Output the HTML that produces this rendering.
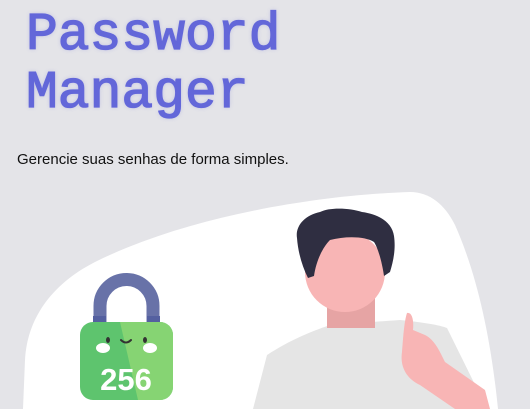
<!DOCTYPE html>
<html><head><style>
html,body{margin:0;padding:0;}
body{width:530px;height:409px;overflow:hidden;background:#e4e4e8;position:relative;font-family:"Liberation Sans",sans-serif;}
h1{position:absolute;left:26px;top:6px;margin:0;font-family:"Liberation Mono",monospace;font-weight:normal;-webkit-text-stroke:1.3px #6367d9;font-size:53px;line-height:58px;color:#6367d9;text-shadow:0 0 4px rgba(99,103,217,0.35);}
p{position:absolute;left:17px;top:151px;margin:0;font-size:15px;color:#111;}
svg{position:absolute;left:0;top:0;}
</style></head><body>
<h1>Password<br>Manager</h1>
<p>Gerencie suas senhas de forma simples.</p>
<svg width="530" height="409" viewBox="0 0 530 409">
<path d="M23 409 L25 360 C27 320 50 285 95 262 C190 215 320 195 410 192 C430 192 445 205 455 225 C475 270 490 330 498 409 Z" fill="#fff"/>
<path d="M100 323 L100 306 A26.5 26.5 0 0 1 153 306 L153 323" fill="none" stroke="#6872a8" stroke-width="13"/>
<rect x="93" y="316" width="13" height="8" fill="#5460a0"/>
<rect x="147" y="316" width="13" height="8" fill="#5460a0"/>
<rect x="80" y="322" width="93" height="78" rx="13" fill="#5ec46e"/>
<path d="M120 322 L160 322 A13 13 0 0 1 173 335 L173 387 A13 13 0 0 1 160 400 L138 400 Z" fill="#86d473"/>
<ellipse cx="108" cy="340" rx="2" ry="3" fill="#333"/>
<ellipse cx="145" cy="340" rx="2" ry="3" fill="#333"/>
<path d="M121 340 Q126 345 131 340" fill="none" stroke="#333" stroke-width="2" stroke-linecap="round"/>
<ellipse cx="103" cy="348" rx="7" ry="5" fill="#fff"/>
<ellipse cx="150" cy="348" rx="7" ry="5" fill="#fff"/>
<text x="126" y="390" text-anchor="middle" font-family="Liberation Sans,sans-serif" font-weight="bold" font-size="31" fill="#fff">256</text>
<path d="M253 409 L267 355 C290 340 310 332 330 325 L400 320 C420 322 440 325 447 328 L487 409 Z" fill="#e5e5e5"/>
<rect x="327" y="298" width="48" height="30" fill="#e6a4a4"/>
<circle cx="345" cy="272" r="40" fill="#f8b5b5"/>
<path d="M297 238 C295 226 305 215 320 212 C330 207 350 208 362 212 C378 214 392 222 394 236 C396 250 393 262 390 272 L384 276 C382 262 378 248 374 242 C365 236 345 236 330 240 C322 248 316 262 314 276 L308 278 C302 266 298 252 297 238 Z" fill="#2f2e41"/>
<path d="M407 313 C412 312 414 320 413 330 L425 335 C435 340 440 352 445 362 L485 390 L490 409 L455 409 L420 385 C405 378 400 365 402 352 C403 340 404 322 407 313 Z" fill="#f8b5b5"/>
</svg>
</body></html>
